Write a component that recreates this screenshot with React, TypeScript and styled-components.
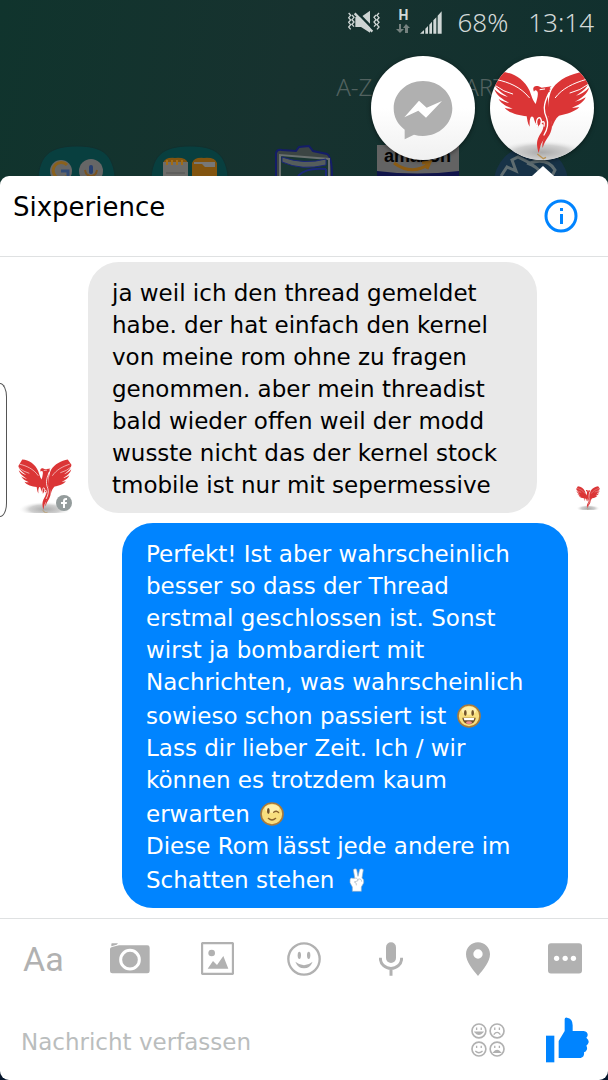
import React from "react";
import styled, { createGlobalStyle } from "styled-components";

const hand = `"DejaVu Sans", "Noto Sans", sans-serif`;
const grey = "#b1b1b1";
const blue = "#0084ff";

const GlobalStyle = createGlobalStyle`
  * { box-sizing: border-box; }
  body { margin: 0; background: #12302e; }
  button { border: 0; background: none; padding: 0; margin: 0; cursor: pointer; font: inherit; }
  svg { display: block; }
`;

const Screen = styled.div`
  min-height: 100vh;
  display: flex;
  flex-direction: column;
  font-family: ${hand};
  background: linear-gradient(100deg, #10342d 0, #17322f 45%, #10302e 100%) 0 0 / 100% 400px no-repeat, #06162c;
`;

const Top = styled.header`
  position: relative;
  height: 176px;
  overflow: hidden;
`;

const StatusBar = styled.div`
  display: flex;
  justify-content: flex-end;
  align-items: center;
  height: 44px;
  padding: 0 14px;
  color: #d3d9d8;
  font-family: "Noto Sans", sans-serif;
  font-size: 26px;
  font-weight: 300;
`;

const Network = styled.span`
  display: flex;
  flex-direction: column;
  align-items: center;
  gap: 2px;
  margin: 0 10px 0 16px;
  padding-bottom: 2px;
  font: bold 14px/13px Roboto, sans-serif;
`;

const Percent = styled.span`
  margin: 0 20px 0 15px;
`;

const Heads = styled.nav`
  position: relative;
  display: flex;
  justify-content: flex-end;
  gap: 15px;
  padding: 12px 14px 0;
`;

const Head = styled.button`
  width: 104px;
  height: 104px;
  border-radius: 50%;
  background: linear-gradient(#fff 50%, #f0f0f0);
  box-shadow: 0 1px 4px rgba(0, 0, 0, 0.5);
  overflow: hidden;
`;

const Pointer = styled.span`
  position: absolute;
  right: 54px;
  bottom: 0;
  border: 11px solid transparent;
  border-top: 0;
  border-bottom: 10px solid #fff;
`;

const PageLabel = styled.div`
  position: absolute;
  right: 102px;
  top: 71px;
  display: flex;
  gap: 92px;
  color: #526260;
  font: 300 24px/32px "Noto Sans", sans-serif;
`;

const HomeApps = styled.div`
  position: absolute;
  inset: auto 20px 0;
  display: flex;
`;

const HomeApp = styled.div`
  flex: 1;
  display: flex;
  justify-content: center;
`;

const Panel = styled.main`
  position: relative;
  flex: 1;
  display: flex;
  flex-direction: column;
  border-radius: 9px;
  background: #fff;
`;

const PanelHeader = styled.div`
  display: flex;
  justify-content: space-between;
  align-items: center;
  height: 81px;
  padding: 0 30px 0 13px;
  border-bottom: 1px solid #dfe1e2;
`;

const Name = styled.h1`
  align-self: flex-start;
  margin: 14px 0 0;
  color: #000;
  font-size: 26px;
  line-height: 34px;
  font-weight: 400;
`;

const Messages = styled.section`
  flex: 1;
  display: flex;
  flex-direction: column;
  gap: 10px;
  padding: 5px 8px 10px 18px;
`;

const Row = styled.div<{ $own?: boolean }>`
  display: flex;
  align-items: flex-end;
  justify-content: ${(p) => (p.$own ? "flex-end" : "flex-start")};
  padding-right: ${(p) => (p.$own ? "32px" : "0")};
`;

const Bubble = styled.p<{ $own?: boolean }>`
  width: ${(p) => (p.$own ? "446px" : "449px")};
  margin: ${(p) => (p.$own ? "0" : "0 auto 0 16px")};
  padding: 15px 0 12px 24px;
  border-radius: 31px;
  background: ${(p) => (p.$own ? blue : "#e9e9e9")};
  color: ${(p) => (p.$own ? "#fff" : "#000")};
  font-size: 23px;
  line-height: 32px;
  white-space: pre;
`;

const Emoji = styled.svg`
  display: inline-block;
  width: 24px;
  height: 24px;
  margin: 6px 0 0 3px;
  vertical-align: -4px;
`;

const Avatar = styled.div`
  position: relative;
  flex: none;
`;

const SeenBy = styled(Avatar)`
  padding-bottom: 3px;
`;

const Badge = styled.span`
  position: absolute;
  right: 0;
  bottom: 2px;
`;

const EdgeHandle = styled.span`
  position: absolute;
  left: 0;
  top: 207px;
  width: 7px;
  height: 134px;
  border: 1px solid #555;
  border-left: 0;
  border-radius: 0 7px 7px 0 / 0 14px 14px 0;
`;

const Tools = styled.div`
  display: flex;
  height: 80px;
  border-top: 1px solid #dfe1e2;
`;

const Tool = styled.button`
  flex: 1;
  display: flex;
  align-items: center;
  justify-content: center;
  color: ${grey};
  fill: ${grey};
`;

const TextTool = styled.span`
  font: 400 34px/40px Roboto, sans-serif;
`;

const Composer = styled.form`
  display: flex;
  align-items: center;
  height: 82px;
  padding: 2px 19px 0 21px;
`;

const Field = styled.input`
  flex: 1;
  min-width: 0;
  padding: 4px 0 0;
  border: 0;
  outline: 0;
  background: none;
  color: #000;
  font: 400 23px/32px ${hand};
  &::placeholder { color: #babdbd; opacity: 1; }
`;

const Stickers = styled.button`
  margin-right: 41px;
`;

function Phoenix({ size, round }: { size: number; round?: boolean }) {
  const id = `ground${size}`;
  return (
    <svg
      width={size}
      height={size}
      viewBox={round ? "6 5 312 312" : "15 50 292 262"}
      preserveAspectRatio="none"
    >
      <defs>
        <radialGradient id={id}>
          <stop offset="0" stopColor="#aaa" />
          <stop offset="0.6" stopColor="#d0d0d0" />
          <stop offset="1" stopColor="#f3f3f3" stopOpacity="0" />
        </radialGradient>
      </defs>
      <ellipse cx="162" cy="294" rx="140" ry="36" fill={`url(#${id})`} />
      <g fill="#db3536">
        <path d="M38 52C75 54 108 74 124 108C130 122 134 140 143 148L156 158L152 190C146 198 147 206 150 216C142 207 139 200 137 190C132 184 129 186 127 192C124 200 125 206 125 217C118 206 118 196 116 186C91 183 62 176 50 160C58 163 68 164 74 163C55 157 38 146 32 134C42 140 54 145 64 146C44 136 24 122 19 105C30 116 44 124 60 128C40 116 20 100 17 84Z" />
        <path d="M284 52C250 58 212 74 194 102C184 118 182 140 180 160C177 172 177 180 182 188C188 196 192 204 193 217C198 204 202 192 213 184C236 179 262 172 274 158C266 160 258 161 252 160C270 154 288 143 293 129C282 136 270 141 260 142C280 132 299 118 303 100C292 112 278 120 264 124C284 112 303 96 304 78Z" />
        <path d="M136 107C134 97 142 93 152 96L161 100L191 96C185 100 183 103 189 104L184 107L186 111C179 114 179 120 180 128L181 185C188 198 188 212 184 224C178 244 164 258 158 272L152 296C146 275 145 262 152 248C158 236 168 226 166 212C160 205 154 209 150 220C143 206 142 194 146 182C139 168 143 148 147 135C150 122 151 114 147 110C143 106 140 108 138 112Z" />
        <path d="M183 180C196 205 194 224 184 242C174 258 168 266 164 281C161 266 166 256 172 244C182 222 184 200 183 180Z" />
      </g>
      <g fill="none" stroke="#fff" strokeWidth="3" strokeLinecap="round">
        <path d="M27 76C62 84 96 96 124 130M24 95Q46 112 74 119" />
        <path d="M292 76C258 86 222 102 202 130M301 90Q278 108 246 116" />
        <path d="M182 118C164 153 167 172 176 192C182 208 178 226 168 242M150 218C140 198 151 187 157 191Q163 200 158 209C166 196 171 203 168 215" strokeWidth="4" />
        <path d="M156 106L170 104" />
      </g>
      <path d="M148 299L166 313L174 309" fill="none" stroke="#b99252" strokeWidth="4" />
    </svg>
  );
}

const HappyEmoji = ({ wink }: { wink?: boolean }) => (
  <Emoji viewBox="0 0 72 72" role="img" aria-label={wink ? "Zwinkern" : "Lachen"}>
    <circle cx="36" cy="36" r="33" fill="#f8de7e" stroke="#a87a3c" strokeWidth="5" />
    <ellipse cx="36" cy="20" rx="22" ry="12" fill="#fff0ac" />
    <ellipse cx="25" cy="27" rx="4" ry="9" fill="#70512b" />
    {wink ? (
      <path d="M41 31q8 -7 15 1M25 49q11 10 22 0" fill="none" stroke="#8b622d" strokeWidth="4" strokeLinecap="round" />
    ) : (
      <>
        <ellipse cx="47" cy="27" rx="4" ry="9" fill="#70512b" />
        <path d="M16 41H56C54 67 18 67 16 41Z" fill="#70512b" />
        <path d="M20 42H52L50 49H22Z" fill="#fff" />
        <ellipse cx="36" cy="56" rx="9" ry="4" fill="#f18f90" />
      </>
    )}
  </Emoji>
);

const Victory = () => (
  <Emoji viewBox="0 0 72 72" role="img" aria-label="Victory">
    <path d="M22 70V57L15 44V34Q18 28 25 31L29 29L25 5Q30 0 35 4L39 25L44 4Q50 0 55 5L51 30Q58 34 56 45L49 57V70Z" fill="#fff" stroke="#8eaac5" strokeWidth="2" />
    <path d="M26 32Q38 27 39 38L28 42M39 34Q49 30 50 41M28 42Q36 44 34 52" fill="none" stroke="#a0acb8" strokeWidth="2" />
  </Emoji>
);

const folder = "M1 50C-1 15 7 1 40 1S79 15 79 50Z";

export default function App() {
  return (
    <Screen>
      <GlobalStyle />
      <Top>
        <PageLabel><span>A-Z</span><span>ART</span></PageLabel>
        <HomeApps>
          <HomeApp>
            <svg width="80" height="31" viewBox="0 0 80 31">
              <path d={folder} fill="#083f3f" stroke="#12302e" />
              <circle cx="24" cy="26" r="11" fill="#666" />
              <path d="M30 20A8 8 0 1 0 30 31" fill="none" stroke="#8a611c" strokeWidth="3" />
              <path d="M24 26H31V31" fill="none" stroke="#304a75" strokeWidth="3" />
              <circle cx="54" cy="26" r="12" fill="#666" />
              <rect x="52" y="20" width="4" height="9" rx="2" fill="#263f71" />
              <path d="M48 25Q49 31 54 31T60 25" fill="none" stroke="#7b5420" strokeWidth="2" />
            </svg>
          </HomeApp>
          <HomeApp>
            <svg width="80" height="31" viewBox="0 0 80 31">
              <path d={folder} fill="#083f3f" stroke="#12302e" />
              <path d="M13 18Q15 12 25 13Q36 12 38 18V31H13Z" fill="#82540f" />
              <path d="M13 17H38V31H13Z" fill="#6d6c69" />
              <path d="M17 15V20M22 15V20M27 15V20M32 15V20" stroke="#a26c15" strokeWidth="2" />
              <path d="M16 28H35" stroke="#535353" />
              <path d="M42 18Q44 12 54 13Q65 12 67 18V31H42Z" fill="#82540f" />
              <path d="M44 17H65V22H55L52 19H44Z" fill="#777" />
            </svg>
          </HomeApp>
          <HomeApp>
            <svg width="60" height="31" viewBox="0 0 60 31">
              <path d="M2 31V8Q3 4 8 5L22 6L25 2L35 1L39 6L53 9Q58 12 58 31" fill="#3c4544" stroke="#141d68" strokeWidth="2" />
              <path d="M6 31V10L55 14V31" fill="#193632" stroke="#6a7170" strokeWidth="2" />
              <path d="M8 12Q30 20 52 14V20Q28 26 8 17Z" fill="#555d5c" stroke="#1b277a" />
              <path d="M24 31Q32 22 52 24M52 24V31" fill="none" stroke="#1b277a" strokeWidth="2" />
            </svg>
          </HomeApp>
          <HomeApp>
            <svg width="82" height="31" viewBox="0 0 82 31">
              <path d="M0 0H82V31H0Z" fill="#636363" />
              <path d="M0 26Q40 31 82 26V31H0Z" fill="#10144a" />
              <text x="7" y="17" fontFamily="Liberation Sans, sans-serif" fontWeight="700" fontSize="18" fill="#050505">amazon</text>
              <path d="M17 18Q35 31 52 19M45 18L53 17L50 24" fill="none" stroke="#8a5b14" strokeWidth="3" />
            </svg>
          </HomeApp>
          <HomeApp>
            <svg width="76" height="31" viewBox="0 0 76 31">
              <circle cx="38" cy="38" r="37" fill="#173247" />
              <path d="M8 31L14 22L23 26L19 15L25 12L37 18Q54 12 62 25L59 31M34 18Q44 21 51 31" fill="none" stroke="#5e6c70" strokeWidth="3" />
            </svg>
          </HomeApp>
        </HomeApps>
        <StatusBar>
          <svg width="32" height="24" viewBox="133 28 96 72" aria-label="Stumm">
            <path d="M135 37l6 7-6 7 6 7-6 7 6 7-6 7 6 7M145 43l6 7-6 7 6 7-6 7 6 7M217 43l-6 7 6 7-6 7 6 7-6 7M226 37l-6 7 6 7-6 7 6 7-6 7 6 7-6 7" fill="none" stroke="#cdd4d3" strokeWidth="4" />
            <path d="M155 49H172L199 30V96L172 79H155Z" fill="#cdd4d3" />
            <path d="M158 33L210 86" stroke="#12302e" strokeWidth="8" />
            <path d="M153 38L206 93" stroke="#cdd4d3" strokeWidth="7" />
          </svg>
          <Network>
            H
            <svg width="14" height="9" viewBox="0 0 14 9"><path d="M3 0H5V5H8L4 9L0 5H3ZM9 9V4H7L10 0L14 4H12V9Z" fill="#75817f" /></svg>
          </Network>
          <svg width="22" height="23" viewBox="348 29 66 69" aria-label="Signal">
            <path d="M348 97L360 86V97ZM364 82L372 74V97H364ZM376 70L384 61V97H376ZM388 57L397 48V97H388ZM401 43L413 30V97H401Z" fill="#d0d7d6" />
          </svg>
          <Percent>68%</Percent>
          <span>13:14</span>
        </StatusBar>
        <Heads aria-label="Chats">
          <Head aria-label="Messenger">
            <svg width="104" height="104" viewBox="202 168 312 312">
              <path d="M358 243C407 243 446 279 446 325S407 408 358 408Q344 408 331 404L303 418V389C282 374 270 351 270 325C270 279 309 243 358 243Z" fill="#b0b0b0" />
              <path d="M302 352L346 302L369 323L415 303L367 353L344 332Z" fill="#fff" />
            </svg>
          </Head>
          <Head aria-label="Sixperience"><Phoenix size={104} round /></Head>
        </Heads>
        <Pointer />
      </Top>

      <Panel>
        <PanelHeader>
          <Name>Sixperience</Name>
          <button aria-label="Info">
            <svg width="34" height="34" viewBox="0 0 34 34">
              <circle cx="17" cy="17" r="15" fill="none" stroke={blue} strokeWidth="3" />
              <path d="M16 9H19V12H16ZM16 15H19V25H16Z" fill={blue} />
            </svg>
          </button>
        </PanelHeader>
        <EdgeHandle />
        <Messages>
          <Row>
            <Avatar>
              <Phoenix size={54} />
              <Badge>
                <svg width="16" height="16" viewBox="0 0 16 16">
                  <circle cx="8" cy="8" r="8" fill="#949c9c" />
                  <path d="M7 13V9H5V7H7V6Q7 3 10 3H11V5H10Q9 5 9 6V7H11L10.7 9H9V13Z" fill="#fff" />
                </svg>
              </Badge>
            </Avatar>
            <Bubble>{`ja weil ich den thread gemeldet
habe. der hat einfach den kernel
von meine rom ohne zu fragen
genommen. aber mein threadist
bald wieder offen weil der modd
wusste nicht das der kernel stock
tmobile ist nur mit sepermessive`}</Bubble>
            <SeenBy><Phoenix size={24} /></SeenBy>
          </Row>
          <Row $own>
            <Bubble $own>
              {`Perfekt! Ist aber wahrscheinlich
besser so dass der Thread
erstmal geschlossen ist. Sonst
wirst ja bombardiert mit
Nachrichten, was wahrscheinlich
sowieso schon passiert ist `}
              <HappyEmoji />
              {`
Lass dir lieber Zeit. Ich / wir
können es trotzdem kaum
erwarten `}
              <HappyEmoji wink />
              {`
Diese Rom lässt jede andere im
Schatten stehen `}
              <Victory />
            </Bubble>
          </Row>
        </Messages>
        <Tools>
          <Tool aria-label="Text"><TextTool>Aa</TextTool></Tool>
          <Tool aria-label="Kamera">
            <svg width="40" height="31" viewBox="330 83 120 93">
              <path d="M335 84H354L350 88L334 93V87ZM330 100Q331 97 336 95L357 90H442Q449 90 449 97V167Q449 174 442 174H337Q330 174 330 167Z" />
              <circle cx="390" cy="133" r="28" fill="none" stroke="#fff" strokeWidth="9" />
            </svg>
          </Tool>
          <Tool aria-label="Bild">
            <svg width="33" height="33" viewBox="600 81 99 99">
              <rect x="603" y="84" width="93" height="93" rx="4" fill="none" stroke={grey} strokeWidth="7" />
              <circle cx="632" cy="114" r="10" />
              <path d="M620 161L636 138L648 150L667 123L682 161Z" />
            </svg>
          </Tool>
          <Tool aria-label="Sticker">
            <svg width="34" height="34" viewBox="0 0 102 102">
              <circle cx="51" cy="51" r="47" fill="none" stroke={grey} strokeWidth="7" />
              <ellipse cx="37" cy="40" rx="5" ry="11" />
              <ellipse cx="65" cy="40" rx="5" ry="11" />
              <path d="M25 59Q51 80 77 59Q69 79 51 79T25 59Z" />
            </svg>
          </Tool>
          <Tool aria-label="Mikrofon">
            <svg width="24" height="34" viewBox="222 80 72 102">
              <rect x="243" y="81" width="30" height="62" rx="15" />
              <path d="M226 127C226 170 290 170 290 127M258 158V181" fill="none" stroke={grey} strokeWidth="9" />
            </svg>
          </Tool>
          <Tool aria-label="Standort">
            <svg width="24" height="34" viewBox="482 79 72 102">
              <path fillRule="evenodd" d="M518 80C538 80 554 96 554 116C554 137 535 161 518 181C501 161 482 137 482 116C482 96 498 80 518 80ZM518 101A14 14 0 1 0 518 129A14 14 0 1 0 518 101Z" />
            </svg>
          </Tool>
          <Tool aria-label="Mehr">
            <svg width="34" height="31" viewBox="727 84 103 93">
              <rect x="727" y="84" width="103" height="92" rx="9" />
              <g fill="#fff"><circle cx="753" cy="130" r="8" /><circle cx="779" cy="130" r="8" /><circle cx="804" cy="130" r="8" /></g>
            </svg>
          </Tool>
        </Tools>
        <Composer onSubmit={(e) => e.preventDefault()}>
          <Field aria-label="Nachricht" placeholder="Nachricht verfassen" />
          <Stickers type="button" aria-label="Emojis">
            <svg width="34" height="34" viewBox="501 322 103 103" fill="none" stroke={grey} strokeWidth="4">
              {[[525, 346], [580, 346], [525, 401], [580, 401]].map(([x, y]) => (
                <g key={`${x}-${y}`}>
                  <circle cx={x} cy={y} r="21" strokeWidth="5" />
                  <path d={`M${x - 7} ${y - 10}v7M${x + 7} ${y - 10}v7`} />
                </g>
              ))}
              <path d="M514 350H536Q525 362 514 350Z" fill={grey} />
              <path d="M514 407Q525 417 536 407M570 357Q580 344 590 357" />
              <path d="M570 411Q580 399 590 411Z" fill={grey} />
            </svg>
          </Stickers>
          <button type="submit" aria-label="Gefällt mir">
            <svg width="43" height="46" viewBox="727 301 129 138" fill={blue}>
              <path d="M727 357H752V437H727Z" />
              <path d="M765 424V373L783 343V308Q783 302 790 303Q807 305 807 326V343H840Q853 345 852 356Q851 361 848 363Q856 369 855 377Q853 385 848 387Q852 394 849 400Q847 406 841 407Q843 421 831 424Z" />
            </svg>
          </button>
        </Composer>
      </Panel>
    </Screen>
  );
}
